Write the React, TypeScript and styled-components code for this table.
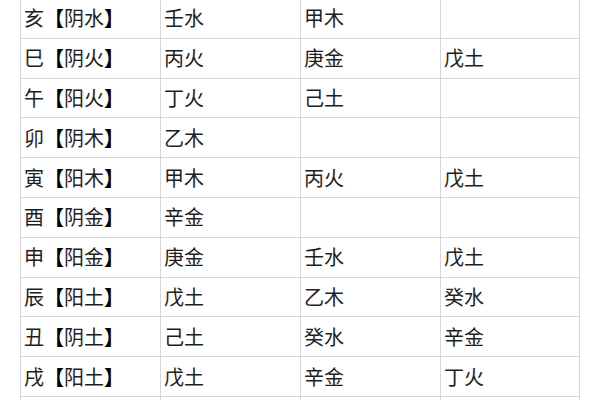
import React from 'react'
import styled, { createGlobalStyle } from 'styled-components'

const GlobalStyle = createGlobalStyle`
  html, body {
    margin: 0;
    padding: 0;
    background: #ffffff;
    overflow: hidden;
  }
  #root {
    width: 600px;
    height: 400px;
    overflow: hidden;
  }
`

const Page = styled.div`
  width: 600px;
  height: 400px;
  overflow: hidden;
  padding-left: 20px;
  box-sizing: border-box;
`

const Table = styled.table`
  border-collapse: collapse;
  margin-top: -2px;
  table-layout: fixed;
  width: 559px;
  font-family: 'Noto Sans CJK SC', 'Noto Sans', sans-serif;
  font-size: 20px;
  color: #1e1e1e;
`

const Cell = styled.td<{ $w: number }>`
  width: ${({ $w }) => $w}px;
  height: 39.8px;
  padding: 0 0 0 3px;
  border: 1px solid #d6d6d6;
  box-sizing: border-box;
  line-height: 22px;
  white-space: nowrap;
  vertical-align: middle;
`

const Bracket = styled.span`
  font-weight: 700;
  color: #000;
`

const widths = [140, 140, 140, 139]

const rows: [string, string, string, string, string][] = [
  ['亥', '阴水', '壬水', '甲木', ''],
  ['巳', '阴火', '丙火', '庚金', '戊土'],
  ['午', '阳火', '丁火', '己土', ''],
  ['卯', '阴木', '乙木', '', ''],
  ['寅', '阳木', '甲木', '丙火', '戊土'],
  ['酉', '阴金', '辛金', '', ''],
  ['申', '阳金', '庚金', '壬水', '戊土'],
  ['辰', '阳土', '戊土', '乙木', '癸水'],
  ['丑', '阴土', '己土', '癸水', '辛金'],
  ['戌', '阳土', '戊土', '辛金', '丁火'],
]

export default function App() {
  return (
    <>
      <GlobalStyle />
      <Page>
        <Table>
          <tbody>
            {rows.map(([branch, kind, a, b, c]) => (
              <tr key={branch}>
                <Cell $w={widths[0]}>
                  {branch}
                  <Bracket>【</Bracket>
                  {kind}
                  <Bracket>】</Bracket>
                </Cell>
                <Cell $w={widths[1]}>{a}</Cell>
                <Cell $w={widths[2]}>{b}</Cell>
                <Cell $w={widths[3]}>{c}</Cell>
              </tr>
            ))}
            <tr>
              {widths.map((w, i) => (
                <Cell key={i} $w={w} />
              ))}
            </tr>
          </tbody>
        </Table>
      </Page>
    </>
  )
}
